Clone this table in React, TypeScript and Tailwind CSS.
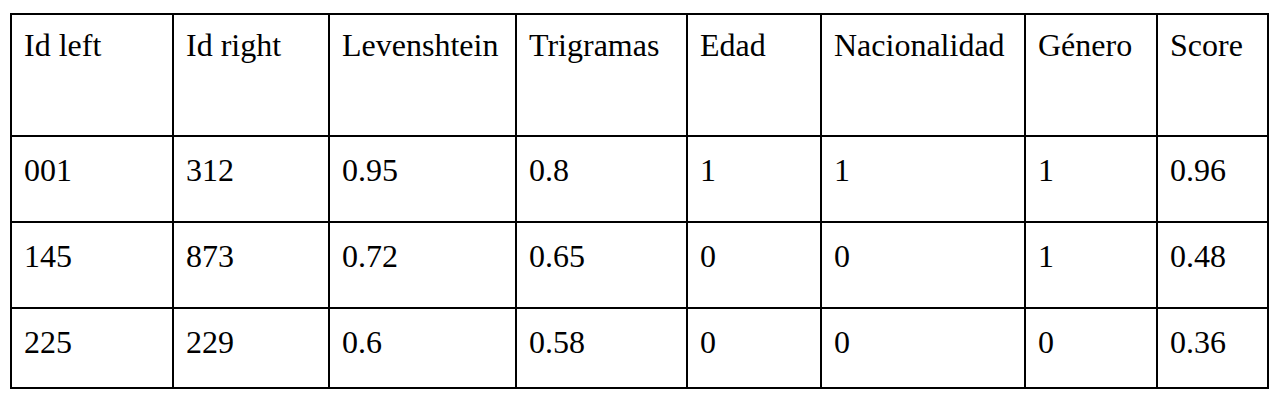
import React from "react";

const headers = ["Id left", "Id right", "Levenshtein", "Trigramas", "Edad", "Nacionalidad", "Género", "Score"];
const rows = [
  ["001", "312", "0.95", "0.8", "1", "1", "1", "0.96"],
  ["145", "873", "0.72", "0.65", "0", "0", "1", "0.48"],
  ["225", "229", "0.6", "0.58", "0", "0", "0", "0.36"],
];

export default function App() {
  return (
    <div className="w-[1280px] h-[402px] bg-white pt-[13px] pl-[10px] font-['Liberation_Serif','Times_New_Roman',serif]">
      <div
        role="table"
        className="inline-grid bg-black p-[2px] gap-[2px] grid-cols-[160px_154px_185px_169px_132px_202px_130px_109px] grid-rows-[120px_84px_84px_78px] text-[32px] leading-[36px] text-black"
      >
        {headers.map((h) => (
          <div key={h} role="columnheader" className="bg-white pl-[12px] pt-[12px] whitespace-nowrap">
            {h}
          </div>
        ))}
        {rows.map((r, i) =>
          r.map((c, j) => (
            <div key={`${i}-${j}`} role="cell" className="bg-white pl-[12px] pt-[15px] whitespace-nowrap">
              {c}
            </div>
          ))
        )}
      </div>
    </div>
  );
}
